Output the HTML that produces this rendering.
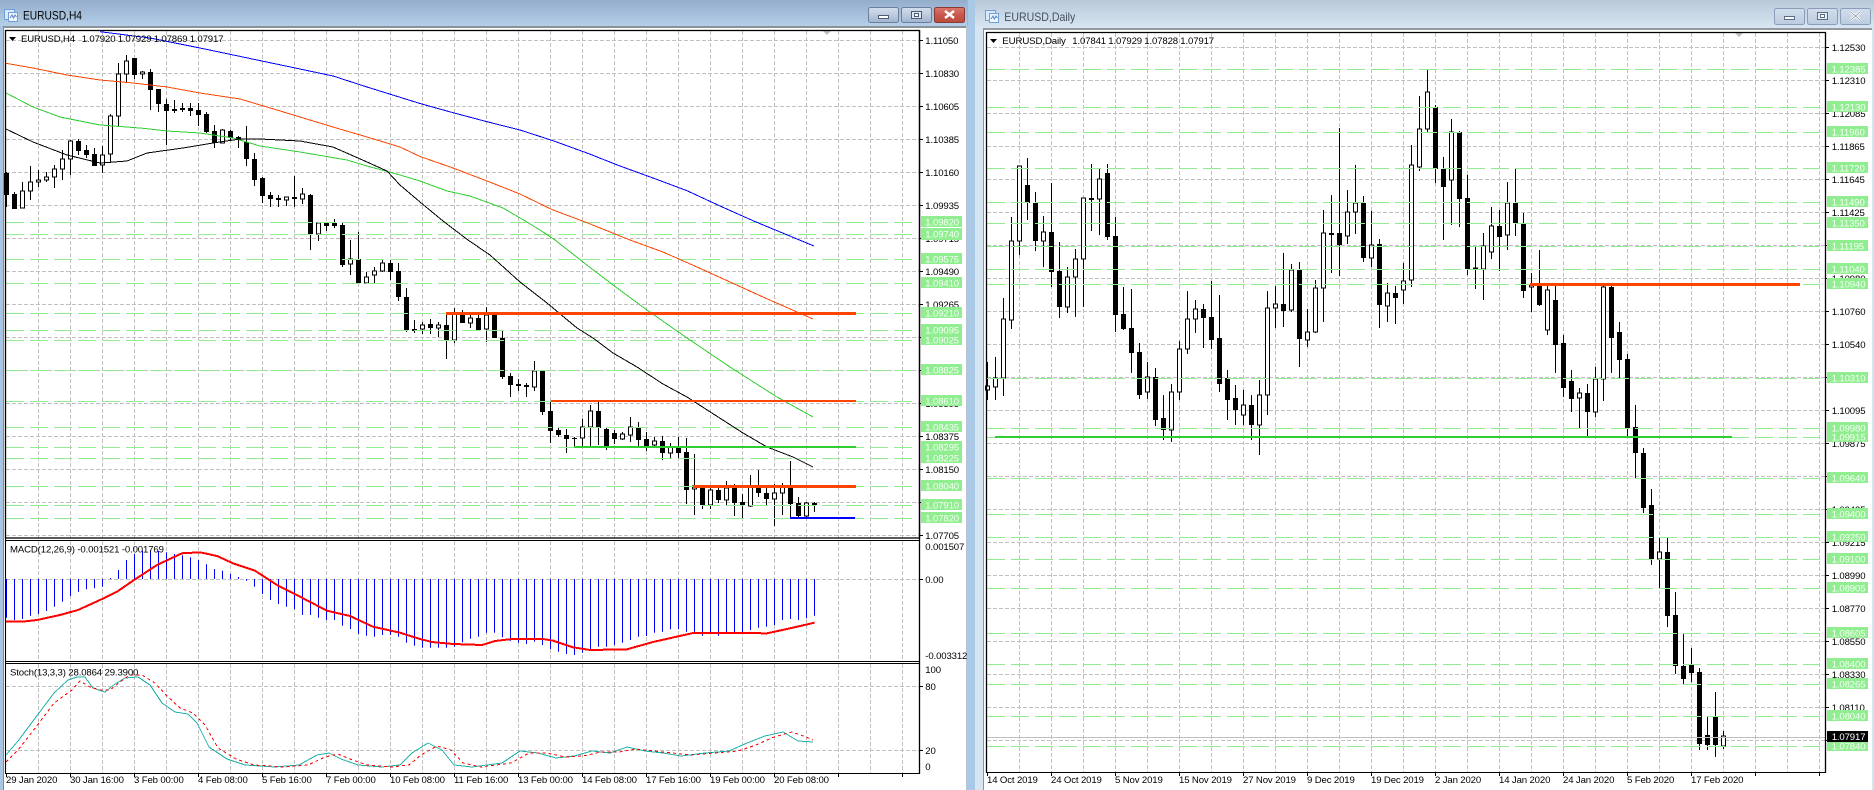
<!DOCTYPE html>
<html><head><meta charset="utf-8"><title>EURUSD</title>
<style>
html,body{margin:0;padding:0;background:#fff;width:1874px;height:790px;overflow:hidden}
svg{display:block}
polyline{shape-rendering:crispEdges}
text{font-family:"Liberation Sans",sans-serif;font-size:9.6px;letter-spacing:-.14px;fill:#000}
.g text,text.w{fill:#f6fff6}
</style></head><body>
<svg width="1874" height="790" viewBox="0 0 1874 790" xmlns="http://www.w3.org/2000/svg">
<defs>
<linearGradient id="t1" x1="0" y1="0" x2="0" y2="1"><stop offset="0" stop-color="#93adcb"/><stop offset="1" stop-color="#b5cfe9"/></linearGradient>
<linearGradient id="t2" x1="0" y1="0" x2="0" y2="1"><stop offset="0" stop-color="#b9c8d8"/><stop offset="1" stop-color="#d8e6f3"/></linearGradient>
<linearGradient id="b1" x1="0" y1="0" x2="0" y2="1"><stop offset="0" stop-color="#d3deec"/><stop offset=".5" stop-color="#bccbde"/><stop offset="1" stop-color="#9fb4ce"/></linearGradient>
<linearGradient id="b2" x1="0" y1="0" x2="0" y2="1"><stop offset="0" stop-color="#d9796c"/><stop offset=".5" stop-color="#c9574b"/><stop offset="1" stop-color="#b84a3e"/></linearGradient>
<linearGradient id="b3" x1="0" y1="0" x2="0" y2="1"><stop offset="0" stop-color="#d2deeb"/><stop offset="1" stop-color="#bccbdf"/></linearGradient>
</defs>
<rect width="1874" height="790" fill="#fff"/>
<!-- left window frame -->
<rect x="0" y="0" width="968" height="26" fill="url(#t1)"/>
<rect x="0" y="26" width="968" height="2" fill="#8c9398"/>
<rect x="0" y="26" width="3" height="764" fill="#a9c5e2"/>
<rect x="3" y="26" width="1" height="764" fill="#7f8a96"/>
<rect x="966" y="26" width="1" height="764" fill="#b8c4d0"/>
<rect x="967" y="0" width="8" height="790" fill="#a9c9e6"/>
<rect x="967" y="0" width="1" height="26" fill="#9fb8d2"/>
<!-- right window frame -->
<rect x="975" y="0" width="899" height="28" fill="url(#t2)"/>
<rect x="975" y="28" width="899" height="2" fill="#93999e"/>
<rect x="975" y="28" width="8" height="762" fill="#d6e5f2"/>
<rect x="983" y="28" width="1" height="762" fill="#8d9399"/>
<rect x="1872" y="28" width="2" height="762" fill="#d6e5f2"/>
<!-- titles -->
<g><rect x="4.5" y="9.5" width="10" height="10" fill="#d9e9fb" stroke="#6f9fd6"/><rect x="8.5" y="12.5" width="9" height="9" fill="#eef6ff" stroke="#6f9fd6"/><path d="M10 18l2-3 1.500 3 1.500-3 1.500 2" fill="none" stroke="#5c86c2"/></g>
<text x="23" y="19.500" style="font-size:12px;letter-spacing:0" textLength="59" lengthAdjust="spacingAndGlyphs" fill="#1b2430">EURUSD,H4</text>
<g><rect x="985.5" y="10.500" width="10" height="10" fill="#d9e9fb" stroke="#6f9fd6"/><rect x="989.500" y="13.500" width="9" height="9" fill="#eef6ff" stroke="#6f9fd6"/><path d="M991 19l2-3 1.500 3 1.500-3 1.500 2" fill="none" stroke="#5c86c2"/></g>
<text x="1004.300" y="21" style="font-size:12px;letter-spacing:0;fill:#44505e" textLength="71" lengthAdjust="spacingAndGlyphs">EURUSD,Daily</text>
<!-- buttons left -->
<rect x="868.500" y="7.500" width="30" height="15" rx="2" fill="url(#b1)" stroke="#6e7f9c"/>
<rect x="878.500" y="15.500" width="10" height="3" fill="#fff" stroke="#4e5a72"/>
<rect x="901.500" y="7.500" width="30" height="15" rx="2" fill="url(#b1)" stroke="#6e7f9c"/>
<rect x="911.500" y="11.500" width="10" height="7" fill="#dfe8f2" stroke="#4e5a72"/><rect x="914.500" y="13.500" width="4" height="3" fill="#fff" stroke="#4e5a72"/>
<rect x="934.500" y="7.500" width="30" height="15" rx="2" fill="url(#b2)" stroke="#8c3b33"/>
<path d="M945 11l9 7M954 11l-9 7" stroke="#fff" stroke-width="2.400" fill="none"/>
<!-- buttons right -->
<rect x="1774.500" y="8.500" width="30" height="16" rx="2" fill="url(#b3)" stroke="#8a9cba"/>
<rect x="1784.500" y="16.500" width="10" height="3" fill="#fff" stroke="#5b6b86"/>
<rect x="1807.500" y="8.500" width="30" height="16" rx="2" fill="url(#b3)" stroke="#8a9cba"/>
<rect x="1817.500" y="12.500" width="10" height="7" fill="#e5edf5" stroke="#5b6b86"/><rect x="1820.500" y="14.500" width="4" height="3" fill="#fff" stroke="#5b6b86"/>
<rect x="1840.500" y="8.500" width="30" height="16" rx="2" fill="url(#b3)" stroke="#8a9cba"/>
<path d="M1851 12l9 8M1860 12l-9 8" stroke="#fff" stroke-width="2.600" fill="none"/>
<path d="M1851 12l9 8M1860 12l-9 8" stroke="#6a7a94" stroke-width=".6" fill="none"/>

<!-- LEFT GRID -->
<g fill="none" stroke="#c0c0c0" stroke-dasharray="4 2">
<path d="M38.5 31V538M70.5 31V538M102.5 31V538M134.5 31V538M166.5 31V538M198.5 31V538M230.5 31V538M262.5 31V538M294.5 31V538M326.5 31V538M358.5 31V538M390.5 31V538M422.5 31V538M454.5 31V538M486.5 31V538M518.5 31V538M550.5 31V538M582.5 31V538M614.5 31V538M646.5 31V538M678.5 31V538M710.5 31V538M742.5 31V538M774.5 31V538M806.5 31V538M838.5 31V538M870.5 31V538M902.5 31V538"/>
<path d="M38.5 541V661M70.5 541V661M102.5 541V661M134.5 541V661M166.5 541V661M198.5 541V661M230.5 541V661M262.5 541V661M294.5 541V661M326.5 541V661M358.5 541V661M390.5 541V661M422.5 541V661M454.5 541V661M486.5 541V661M518.5 541V661M550.5 541V661M582.5 541V661M614.5 541V661M646.5 541V661M678.5 541V661M710.5 541V661M742.5 541V661M774.5 541V661M806.5 541V661M838.5 541V661M870.5 541V661M902.5 541V661"/>
<path d="M38.5 664V773M70.5 664V773M102.5 664V773M134.5 664V773M166.5 664V773M198.5 664V773M230.5 664V773M262.5 664V773M294.5 664V773M326.5 664V773M358.5 664V773M390.5 664V773M422.5 664V773M454.5 664V773M486.5 664V773M518.5 664V773M550.5 664V773M582.5 664V773M614.5 664V773M646.5 664V773M678.5 664V773M710.5 664V773M742.5 664V773M774.5 664V773M806.5 664V773M838.5 664V773M870.5 664V773M902.5 664V773"/>
<path d="M6 40.500H919M6 73.500H919M6 106.500H919M6 139.500H919M6 172.500H919M6 205.500H919M6 238.500H919M6 271.500H919M6 304.500H919M6 337.500H919M6 370.500H919M6 403.500H919M6 436.500H919M6 469.500H919M6 502.500H919M6 535.500H919M6 579.500H919M6 686.500H919M6 750.500H919"/>
</g>
<!-- LEFT CANDLES -->
<path fill="none" stroke="#000" stroke-width="1" d="M6.5 172V207M14.5 192V209M22.5 182V208M30.5 166V200M38.5 170V187M46.5 172V182M54.5 165V188M62.5 150V180M70.5 140V175M78.5 139V155M86.5 145V158M94.5 148V166M102.5 146V173M110.500 114V163M118.500 63V126M126.500 55V83M134.500 58V79M142.500 71V79M150.500 69V110M158.500 89V112M166.500 99V145M174.500 100V113M182.500 103V112M190.500 103V116M198.500 103V126M206.500 112V133M214.500 125V148M222.500 129V143M230.500 130V140M238.500 136V148M246.500 126V166M254.500 153V186M262.500 177V203M270.500 192V207M278.500 195V207M286.500 197V206M294.500 176V207M302.500 188V204M310.500 194V250M318.500 223V241M326.500 223V231M334.500 219V228M342.500 223V267M350.500 240V275M358.500 232V283M366.500 272V283M374.500 267V283M382.500 260V272M390.500 260V280M398.500 263V301M406.500 288V332M414.500 320V333M422.500 322V334M430.500 319V334M438.500 322V337M446.500 313V359M454.500 308V343M462.500 310V323M470.500 315V328M478.500 314V330M486.500 307V342M494.500 314V338M502.500 330V379M510.500 373V397M518.500 379V391M526.500 383V397M534.500 361V391M542.500 370V415M550.500 402V443M558.500 427V437M566.500 429V453M574.500 437V447M582.500 419V447M590.500 405V447M598.500 402V445M606.500 428V450M614.500 430V444M622.500 432V440M630.500 417V442M638.500 422V447M646.500 432V451M654.500 437V448M662.500 436V460M670.500 443V458M678.500 437V458M686.500 438V504M694.500 454V515M702.500 486V509M710.500 487V509M718.500 488V503M726.500 481V505M734.500 484V516M742.500 494V519M750.500 475V507M758.500 470V497M766.500 488V505M774.500 484V526M782.500 483V515M790.500 461V518M798.500 497V518M806.500 502V517M814.500 502V512"/>
<path fill="#fff" stroke="#000" stroke-width="1" d="M20.500 191h4V208h-4zM28.500 182h4V191h-4zM36.500 180h4V182h-4zM44.500 177h4V180h-4zM52.500 169h4V177h-4zM60.500 159h4V169h-4zM68.500 141h4V159h-4zM100.500 155h4V165h-4zM108.500 116h4V154h-4zM116.500 74h4V116h-4zM124.500 61h4V74h-4zM140.500 72h4V74h-4zM220.500 130h4V143h-4zM284.500 197h4V200h-4zM300.500 194h4V199h-4zM316.500 223h4V234h-4zM348.500 259h4V264h-4zM364.500 277h4V283h-4zM372.500 271h4V275h-4zM380.500 263h4V271h-4zM420.500 325h4V329h-4zM436.500 325h4V328h-4zM452.500 314h4V340h-4zM468.500 318h4V323h-4zM484.500 315h4V329h-4zM532.500 371h4V387h-4zM580.500 427h4V438h-4zM588.500 411h4V427h-4zM620.500 434h4V439h-4zM628.500 427h4V435h-4zM652.500 441h4V445h-4zM668.500 447h4V453h-4zM692.500 486h4V489h-4zM708.500 490h4V505h-4zM724.500 488h4V500h-4zM748.500 487h4V506h-4zM772.500 493h4V499h-4zM780.500 487h4V493h-4zM804.500 503h4V516h-4z"/>
<path fill="none" stroke="#000" stroke-width="5" d="M6.500 173V195M14.500 194V209M78.500 141V151M86.500 150V155M94.500 154V166M134.500 58V75M150.500 72V90M158.500 89V104M166.500 104V111M174.500 109V111M182.500 108V110M190.500 108V111M198.500 110V115M206.500 114V132M214.500 131V143M230.500 131V138M238.500 137V140M246.500 142V159M254.500 159V180M262.500 178V196M270.500 195V199M278.500 198V200M294.500 197V199M310.500 195V234M326.500 223V226M334.500 223V226M342.500 225V265M358.500 259V283M390.500 263V272M398.500 271V297M406.500 297V330M414.500 329V331M430.500 324V328M446.500 325V340M462.500 314V323M478.500 318V330M494.500 315V338M502.500 338V377M510.500 376V385M518.500 384V386M526.500 385V387M542.500 371V412M550.500 411V431M558.500 430V435M566.500 435V439M574.500 438V439M598.500 411V428M606.500 429V446M614.500 433V439M638.500 428V440M646.500 439V446M662.500 441V453M678.500 447V453M686.500 452V490M702.500 487V505M718.500 490V500M734.500 487V503M742.500 502V505M758.500 488V493M766.500 493V499M790.500 487V504M798.500 503V516M814.500 503V505"/>
<!-- LEFT GREEN LINES -->
<path fill="none" stroke="#90ee90" stroke-dasharray="18 6" d="M6 222.500H912M6 234.500H912M6 259.500H912M6 283.500H912M6 313.500H912M6 330.500H912M6 340.500H912M6 370.500H912M6 401.500H912M6 427.500H912M6 447.500H912M6 458.500H912M6 486.500H912M6 505.500H912M6 518.500H912"/>
<!-- LEFT MAs -->
<polyline fill="none" stroke="#0000ff" points="100,31.700 150,38 200,48 300,69 333,76 367,87 420,103.500 453,112.700 487,121.700 520,130 553,140.700 587,153 620,166 653,178 687,190.700 720,206 753,220.700 797,239 814,246"/>
<polyline fill="none" stroke="#ff4500" points="6,63.300 33,68 67,75 100,80 133,83 167,87 200,93 240,99 267,107 300,117 333,127 367,137 400,147 420,156.500 453,168 487,181 520,194 553,210 587,222.700 620,236 630,240 663,252 697,267 730,282 763,297 797,312 813,319"/>
<polyline fill="none" stroke="#32cd32" points="6,93 33,107 60,117 100,125 140,128 167,131 200,133 233,138 260,146 300,152 347,160 367,166 400,175 420,181 447,191 470,196 503,208 527,222 543,232 555,240 583,262 613,285 647,310 687,338 730,367 777,397 813,417"/>
<polyline fill="none" stroke="#000" points="6,129 33,142 67,155 100,163 127,161 147,153 183,148 213,143 240,139 260,139 300,141 333,147 367,162 387,171 400,185 420,202 443,221 468,240 490,255 520,282 547,303 577,328 593,338 613,353 637,367 663,384 687,397 743,433 767,447 793,457 813,467"/>
<!-- LEFT THICK -->
<rect x="446" y="312" width="410" height="3" fill="#ff4500"/>
<rect x="551" y="400" width="305" height="2" fill="#ff4500"/>
<rect x="574" y="446" width="282" height="2" fill="#32cd32"/>
<rect x="693" y="485" width="163" height="3" fill="#ff4500"/>
<rect x="790" y="517" width="65" height="2" fill="#0000ff"/>
<path d="M823 31h8l-4 4z" fill="#c0c0c0"/>
<!-- MACD -->
<path fill="none" stroke="#0000ff" d="M6.500 579V617.700M14.500 579V620M22.500 579V619M30.500 579V615.700M38.500 579V614M46.500 579V611M54.500 579V606.700M62.500 579V601.700M70.500 579V596M78.500 579V591.700M86.500 579V589.300M94.500 579V588.300M102.500 579V586.700M110.500 579V578M118.500 579V570M126.500 579V560M134.500 579V554M142.500 579V550.700M150.500 579V550M158.500 579V551M166.500 579V552.300M174.500 579V554M182.500 579V555.300M190.500 579V557.300M198.500 579V560M206.500 579V564.300M214.500 579V569M222.500 579V570.700M230.500 579V574M238.500 579V577M246.500 579V580.700M254.500 579V586.700M262.500 579V594M270.500 579V600M278.500 579V604M286.500 579V606.700M294.500 579V609.300M302.500 579V615M310.500 579V615M318.500 579V617.700M326.500 579V620M334.500 579V620M342.500 579V625.700M350.500 579V629M358.500 579V634M366.500 579V635.700M374.500 579V636.700M382.500 579V635M390.500 579V635M398.500 579V636.700M406.500 579V642.700M414.500 579V645.700M422.500 579V647.700M430.500 579V647.700M438.500 579V647.700M446.500 579V647.700M454.500 579V646.700M462.500 579V642.300M470.500 579V638.700M478.500 579V636.700M486.500 579V632.700M494.500 579V632.700M502.500 579V637.300M510.500 579V640.700M518.500 579V642.700M526.500 579V644M534.500 579V641.700M542.500 579V645M550.500 579V649M558.500 579V651.700M566.500 579V654M574.500 579V655M582.500 579V652.700M590.500 579V650M598.500 579V646.700M606.500 579V646.700M614.500 579V645M622.500 579V642.700M630.500 579V640M638.500 579V636.700M646.500 579V636M654.500 579V632.700M662.500 579V631.700M670.500 579V629.300M678.500 579V629.300M686.500 579V631.700M694.500 579V631.700M702.500 579V635.700M710.500 579V633.300M718.500 579V635.700M726.500 579V633.300M734.500 579V633.300M742.500 579V632.700M750.500 579V630M758.500 579V627.700M766.500 579V626.700M774.500 579V625M782.500 579V620M790.500 579V619M798.500 579V620M806.500 579V618.300M814.500 579V615.700"/>
<polyline fill="none" stroke="#ff0000" stroke-width="2" points="6,621.700 22,621.700 37,620 60,615 78,610 100,600 117,591.700 133,580.700 157,565 182,553.300 200,552.300 217,556 233,563.300 255,570.700 277,585 300,596.700 327,610.700 350,616 373,626.700 400,632.700 420,639 432,642 453,644 482,645 495,641 512,639 543,639 553,640.700 573,647.300 590,650 627,649.300 653,642 693,633 727,633 767,633.300 787,629 814.500,622.700"/>
<!-- STOCH -->
<polyline fill="none" stroke="#20b2aa" points="6,755 18,741 36,717 54,693 68,680 77,677 85,677 93,688 105,692 115,684 125,678 138,677 150,685 162,703 175,712 188,714 197,723 209,747 227,759 245,765 275,767 299,765 317,755 329,753 341,759 358,765 382,767 400,765 412,753 428,743 442,750 454,765 472,767 502,763 520,751 538,753 556,758 574,756 592,751 610,753 627,747 645,751 663,753 681,756 705,753 729,751 747,743 765,736 783,732 798,741 813,742"/>
<polyline fill="none" stroke="#ff0000" stroke-dasharray="3 3" points="6,762 18,750 36,727 54,703 72,690 80,681 90,687 100,690 110,690 120,682 130,675 142,675 155,683 166,695 180,708 193,713 205,725 218,748 236,759 254,765 284,767 308,765 325,757 338,754 350,759 367,765 391,767 409,765 421,755 437,746 451,750 463,763 481,767 511,763 529,753 547,753 565,757 583,756 601,752 619,752 636,749 654,751 672,753 690,755 714,753 738,751 756,745 774,737 792,732 806,737 813,740"/>
<!-- LEFT pane frames -->
<g fill="none" stroke="#000">
<rect x="5.500" y="30.500" width="914" height="507.500" stroke-width="1.300"/>
<path d="M5.500 540.500H919.500M5.500 661.500H919.500M5.500 663.500H919.500M5.500 773.500H919.500M5.500 538V774" stroke-width="1.100"/>
<path d="M920 40.500h3M920 73.500h3M920 106.500h3M920 139.500h3M920 172.500h3M920 205.500h3M920 238.500h3M920 271.500h3M920 304.500h3M920 337.500h3M920 370.500h3M920 403.500h3M920 436.500h3M920 469.500h3M920 502.500h3M920 535.500h3M920 579.500h3M920 686.500h3M920 750.500h3M6.500 774v3M70.500 774v3M134.500 774v3M198.500 774v3M262.500 774v3M326.500 774v3M390.500 774v3M454.500 774v3M518.500 774v3M582.500 774v3M646.500 774v3M710.500 774v3M774.500 774v3M838.500 774v3M902.500 774v3"/>
</g>
<path d="M919.500 30V774" stroke="#000" stroke-width="1.300"/>
<path d="M9 37h7l-3.500 4z" fill="#000"/>
<text x="21" y="42" textLength="54" lengthAdjust="spacingAndGlyphs">EURUSD,H4</text><text x="81.700" y="42">1.07920</text><text x="117.700" y="42">1.07929</text><text x="153.700" y="42">1.07869</text><text x="189.700" y="42">1.07917</text>
<text x="10" y="552.500">MACD(12,26,9) -0.001521 -0.001769</text>
<text x="10" y="675.500">Stoch(13,3,3) 28.0864 29.3900</text>
<!-- left axis text -->
<text x="925.300" y="44">1.11050</text><text x="925.300" y="77">1.10830</text><text x="925.300" y="110">1.10605</text><text x="925.300" y="143">1.10385</text><text x="925.300" y="176">1.10160</text><text x="925.300" y="209">1.09935</text><text x="925.300" y="242">1.09715</text><text x="925.300" y="275">1.09490</text><text x="925.300" y="308">1.09265</text><text x="925.300" y="341">1.09040</text><text x="925.300" y="374">1.08820</text><text x="925.300" y="407">1.08595</text><text x="925.300" y="440">1.08375</text><text x="925.300" y="473">1.08150</text><text x="925.300" y="506">1.07930</text><text x="925.300" y="539">1.07705</text>
<text x="925.300" y="550">0.001507</text><text x="925.300" y="583">0.00</text><text x="925.300" y="659">-0.003312</text>
<text x="925.300" y="673">100</text><text x="925.300" y="690">80</text><text x="925.300" y="754">20</text><text x="925.300" y="770">0</text>
<g fill="#90ee90"><rect x="921" y="216" width="41" height="11"/><rect x="921" y="228" width="41" height="12"/><rect x="921" y="253" width="41" height="11"/><rect x="921" y="277" width="41" height="11"/><rect x="921" y="307" width="41" height="11"/><rect x="921" y="324" width="41" height="21"/><rect x="921" y="364" width="41" height="11"/><rect x="921" y="395" width="41" height="11"/><rect x="921" y="421" width="41" height="11"/><rect x="921" y="441" width="41" height="11"/><rect x="921" y="452" width="41" height="11"/><rect x="921" y="480" width="41" height="11"/><rect x="921" y="499" width="41" height="11"/><rect x="921" y="512" width="41" height="11"/></g>
<g class="g"><text x="925.300" y="225.500">1.09820</text><text x="925.300" y="237.500">1.09740</text><text x="925.300" y="262.500">1.09575</text><text x="925.300" y="286.500">1.09410</text><text x="925.300" y="316.500">1.09210</text><text x="925.300" y="333.500">1.09095</text><text x="925.300" y="343.500">1.09025</text><text x="925.300" y="373.500">1.08825</text><text x="925.300" y="404.500">1.08610</text><text x="925.300" y="430.500">1.08435</text><text x="925.300" y="450.500">1.08295</text><text x="925.300" y="461.500">1.08225</text><text x="925.300" y="489.500">1.08040</text><text x="925.300" y="508.500">1.07910</text><text x="925.300" y="521.500">1.07820</text></g>
<!-- left dates -->
<text x="6" y="783">29 Jan 2020</text><text x="70" y="783">30 Jan 16:00</text><text x="134" y="783">3 Feb 00:00</text><text x="198" y="783">4 Feb 08:00</text><text x="262" y="783">5 Feb 16:00</text><text x="326" y="783">7 Feb 00:00</text><text x="390" y="783">10 Feb 08:00</text><text x="454" y="783">11 Feb 16:00</text><text x="518" y="783">13 Feb 00:00</text><text x="582" y="783">14 Feb 08:00</text><text x="646" y="783">17 Feb 16:00</text><text x="710" y="783">19 Feb 00:00</text><text x="774" y="783">20 Feb 08:00</text>

<!-- RIGHT GRID -->
<g fill="none" stroke="#c0c0c0" stroke-dasharray="4 2">
<path d="M1019.500 33V772M1051.500 33V772M1083.500 33V772M1115.500 33V772M1147.500 33V772M1179.500 33V772M1211.500 33V772M1243.500 33V772M1275.500 33V772M1307.500 33V772M1339.500 33V772M1371.500 33V772M1403.500 33V772M1435.500 33V772M1467.500 33V772M1499.500 33V772M1531.500 33V772M1563.500 33V772M1595.500 33V772M1627.500 33V772M1659.500 33V772M1691.500 33V772M1723.500 33V772M1755.500 33V772M1787.500 33V772M1819.500 33V772"/>
<path d="M987 47.500H1825M987 80.500H1825M987 113.500H1825M987 146.500H1825M987 179.500H1825M987 212.500H1825M987 245.500H1825M987 278.500H1825M987 311.500H1825M987 344.500H1825M987 377.500H1825M987 410.500H1825M987 443.500H1825M987 476.500H1825M987 509.500H1825M987 542.500H1825M987 575.500H1825M987 608.500H1825M987 641.500H1825M987 674.500H1825M987 707.500H1825M987 740.500H1825"/>
</g>
<!-- RIGHT CANDLES -->
<path fill="none" stroke="#000" d="M987.500 362V400M995.500 357V400M1003.500 298V396M1011.500 217V329M1019.500 166V255M1027.500 158V220M1035.500 192V251M1043.500 216V267M1051.500 183V287M1059.500 242V318M1067.500 267V313M1075.500 249V317M1083.500 198V307M1091.500 164V231M1099.500 168V235M1107.500 164V240M1115.500 217V332M1123.500 287V330M1131.500 289V373M1139.500 343V399M1147.500 362V399M1155.500 368V426M1163.500 395V440M1171.500 384V442M1179.500 341V400M1187.500 291V354M1195.500 300V333M1203.500 304V348M1211.500 281V349M1219.500 295V392M1227.500 370V420M1235.500 385V425M1243.500 390V425M1251.500 395V440M1259.500 380V455M1267.500 291V415M1275.500 286V328M1283.500 253V327M1291.500 264V312M1299.500 262V367M1307.500 309V347M1315.500 280V333M1323.500 210V322M1331.500 195V273M1339.500 128V276M1347.500 190V244M1355.500 165V234M1363.500 196V262M1371.500 211V267M1379.500 239V328M1387.500 283V322M1395.500 286V324M1403.500 263V304M1411.500 145V287M1419.500 96V171M1427.500 70V132M1435.500 105V183M1443.500 157V240M1451.500 119V225M1459.500 131V227M1467.500 175V275M1475.500 247V289M1483.500 233V300M1491.500 207V259M1499.500 210V271M1507.500 182V250M1515.500 169V236M1523.500 213V298M1531.500 273V312M1539.500 250V306M1547.500 285V335M1555.500 286V373M1563.500 335V397M1571.500 370V412M1579.500 388V429M1587.500 384V436M1595.500 367V417M1603.500 285V401M1611.500 285V373M1619.500 322V378M1627.500 354V436M1635.500 405V479M1643.500 448V513M1651.500 489V565M1659.500 538V588M1667.500 538V627M1675.500 592V674M1683.500 634V684M1691.500 648V682M1699.500 668V750M1707.500 717V750M1715.500 692V757M1723.500 731V749"/>
<path fill="#fff" stroke="#000" d="M985.500 386h4V390h-4zM993.500 378h4V387h-4zM1001.500 319h4V378h-4zM1009.500 241h4V320h-4zM1017.500 166h4V241h-4zM1041.500 232h4V241h-4zM1065.500 277h4V307h-4zM1073.500 259h4V277h-4zM1081.500 198h4V259h-4zM1097.500 179h4V199h-4zM1145.500 377h4V392h-4zM1169.500 392h4V430h-4zM1177.500 349h4V392h-4zM1185.500 319h4V349h-4zM1193.500 309h4V319h-4zM1241.500 405h4V415h-4zM1257.500 395h4V425h-4zM1265.500 308h4V395h-4zM1273.500 304h4V308h-4zM1289.500 270h4V310h-4zM1305.500 332h4V340h-4zM1313.500 288h4V332h-4zM1321.500 233h4V288h-4zM1345.500 212h4V236h-4zM1353.500 203h4V212h-4zM1369.500 245h4V258h-4zM1385.500 293h4V306h-4zM1401.500 281h4V290h-4zM1409.500 165h4V280h-4zM1417.500 129h4V167h-4zM1425.500 92h4V129h-4zM1449.500 132h4V180h-4zM1473.500 268h4V269h-4zM1481.500 246h4V269h-4zM1489.500 226h4V252h-4zM1505.500 203h4V235h-4zM1529.500 285h4V287h-4zM1545.500 290h4V330h-4zM1577.500 393h4V398h-4zM1593.500 379h4V412h-4zM1601.500 287h4V379h-4zM1657.500 552h4V559h-4zM1721.500 736h4V746h-4z"/>
<path fill="none" stroke="#000" stroke-width="5" d="M1027.500 185V203M1035.500 203V241M1051.500 232V272M1059.500 271V307M1091.500 198V200M1107.500 173V237M1115.500 236V315M1123.500 314V329M1131.500 328V353M1139.500 352V395M1155.500 377V420M1163.500 418V430M1203.500 309V318M1211.500 317V340M1219.500 338V384M1227.500 378V400M1235.500 398V410M1251.500 405V425M1283.500 304V311M1299.500 270V339M1331.500 233V235M1339.500 233V245M1363.500 203V258M1379.500 244V305M1395.500 293V298M1435.500 107V169M1443.500 169V187M1459.500 132V199M1467.500 198V269M1499.500 226V237M1515.500 203V223M1523.500 224V291M1539.500 286V305M1555.500 300V345M1563.500 343V388M1571.500 381V399M1587.500 393V412M1611.500 287V338M1619.500 332V360M1627.500 359V428M1635.500 427V453M1643.500 453V508M1651.500 505V559M1667.500 552V616M1675.500 615V666M1683.500 666V679M1691.500 665V673M1699.500 672V744M1707.500 735V745M1715.500 717V745"/>
<!-- RIGHT GREEN -->
<path fill="none" stroke="#90ee90" stroke-dasharray="18 6" d="M987 69.500H1820M987 107.500H1820M987 132.500H1820M987 168.500H1820M987 202.500H1820M987 223.500H1820M987 246.500H1820M987 269.500H1820M987 284.500H1820M987 378.500H1820M987 428.500H1820M987 437.500H1820M987 478.500H1820M987 514.500H1820M987 537.500H1820M987 559.500H1820M987 588.500H1820M987 633.500H1820M987 664.500H1820M987 684.500H1820M987 716.500H1820M987 746.500H1820"/>
<path d="M987 737.500H1825" stroke="#c0c0c0"/>
<!-- RIGHT THICK -->
<rect x="1530" y="283" width="270" height="3" fill="#ff4500"/>
<rect x="995" y="436" width="737" height="2" fill="#32cd32"/>
<path d="M1735 33h8l-4 4z" fill="#c0c0c0"/>
<g fill="none" stroke="#000"><path d="M986.500 32V773M1825.500 32V773" stroke-width="1.300"/><path d="M986 32.500H1826" stroke-width="1.300"/><path d="M986 772.500H1826"/>
<path d="M1826 47.500h3M1826 80.500h3M1826 113.500h3M1826 146.500h3M1826 179.500h3M1826 212.500h3M1826 245.500h3M1826 278.500h3M1826 311.500h3M1826 344.500h3M1826 377.500h3M1826 410.500h3M1826 443.500h3M1826 476.500h3M1826 509.500h3M1826 542.500h3M1826 575.500h3M1826 608.500h3M1826 641.500h3M1826 674.500h3M1826 707.500h3M1826 740.500h3M987.500 773v3M1051.500 773v3M1115.500 773v3M1179.500 773v3M1243.500 773v3M1307.500 773v3M1371.500 773v3M1435.500 773v3M1499.500 773v3M1563.500 773v3M1627.500 773v3M1691.500 773v3M1755.500 773v3M1819.500 773v3"/></g>
<path d="M990 39h7l-3.500 4z" fill="#000"/>
<text x="1002.300" y="44" textLength="63.400" lengthAdjust="spacingAndGlyphs">EURUSD,Daily</text><text x="1072.300" y="44">1.07841</text><text x="1108.300" y="44">1.07929</text><text x="1144.300" y="44">1.07828</text><text x="1180.300" y="44">1.07917</text>
<!-- right axis -->
<text x="1831.700" y="51">1.12530</text><text x="1831.700" y="84">1.12310</text><text x="1831.700" y="117">1.12085</text><text x="1831.700" y="150">1.11865</text><text x="1831.700" y="183">1.11645</text><text x="1831.700" y="216">1.11425</text><text x="1831.700" y="249">1.11205</text><text x="1831.700" y="282">1.10980</text><text x="1831.700" y="315">1.10760</text><text x="1831.700" y="348">1.10540</text><text x="1831.700" y="381">1.10315</text><text x="1831.700" y="414">1.10095</text><text x="1831.700" y="447">1.09875</text><text x="1831.700" y="480">1.09655</text><text x="1831.700" y="513">1.09435</text><text x="1831.700" y="546">1.09215</text><text x="1831.700" y="579">1.08990</text><text x="1831.700" y="612">1.08770</text><text x="1831.700" y="645">1.08550</text><text x="1831.700" y="678">1.08330</text><text x="1831.700" y="711">1.08110</text><text x="1831.700" y="744">1.07890</text>
<g fill="#90ee90"><rect x="1827" y="63" width="41" height="11"/><rect x="1827" y="101" width="41" height="11"/><rect x="1827" y="126" width="41" height="11"/><rect x="1827" y="162" width="41" height="11"/><rect x="1827" y="196" width="41" height="11"/><rect x="1827" y="217" width="41" height="11"/><rect x="1827" y="240" width="41" height="11"/><rect x="1827" y="263" width="41" height="11"/><rect x="1827" y="278" width="41" height="11"/><rect x="1827" y="372" width="41" height="11"/><rect x="1827" y="422" width="41" height="20"/><rect x="1827" y="472" width="41" height="11"/><rect x="1827" y="508" width="41" height="11"/><rect x="1827" y="531" width="41" height="11"/><rect x="1827" y="553" width="41" height="11"/><rect x="1827" y="582" width="41" height="11"/><rect x="1827" y="627" width="41" height="11"/><rect x="1827" y="658" width="41" height="11"/><rect x="1827" y="678" width="41" height="11"/><rect x="1827" y="710" width="41" height="11"/><rect x="1827" y="740" width="41" height="11"/></g>
<rect x="1827" y="731" width="41" height="11" fill="#000"/>
<g class="g"><text x="1831.700" y="72.500">1.12385</text><text x="1831.700" y="110.500">1.12130</text><text x="1831.700" y="135.500">1.11960</text><text x="1831.700" y="171.500">1.11720</text><text x="1831.700" y="205.500">1.11490</text><text x="1831.700" y="226.500">1.11350</text><text x="1831.700" y="249.500">1.11195</text><text x="1831.700" y="272.500">1.11040</text><text x="1831.700" y="287.500">1.10940</text><text x="1831.700" y="381.500">1.10310</text><text x="1831.700" y="431.500">1.09980</text><text x="1831.700" y="440.500">1.09915</text><text x="1831.700" y="481.500">1.09640</text><text x="1831.700" y="517.500">1.09400</text><text x="1831.700" y="540.500">1.09250</text><text x="1831.700" y="562.500">1.09100</text><text x="1831.700" y="591.500">1.08905</text><text x="1831.700" y="636.500">1.08605</text><text x="1831.700" y="667.500">1.08400</text><text x="1831.700" y="687.500">1.08265</text><text x="1831.700" y="719.500">1.08040</text><text x="1831.700" y="749.500">1.07840</text><text x="1831.700" y="740" style="fill:#fff">1.07917</text></g>
<!-- right dates -->
<text x="987" y="783">14 Oct 2019</text><text x="1051" y="783">24 Oct 2019</text><text x="1115" y="783">5 Nov 2019</text><text x="1179" y="783">15 Nov 2019</text><text x="1243" y="783">27 Nov 2019</text><text x="1307" y="783">9 Dec 2019</text><text x="1371" y="783">19 Dec 2019</text><text x="1435" y="783">2 Jan 2020</text><text x="1499" y="783">14 Jan 2020</text><text x="1563" y="783">24 Jan 2020</text><text x="1627" y="783">5 Feb 2020</text><text x="1691" y="783">17 Feb 2020</text>
</svg>
</body></html>
